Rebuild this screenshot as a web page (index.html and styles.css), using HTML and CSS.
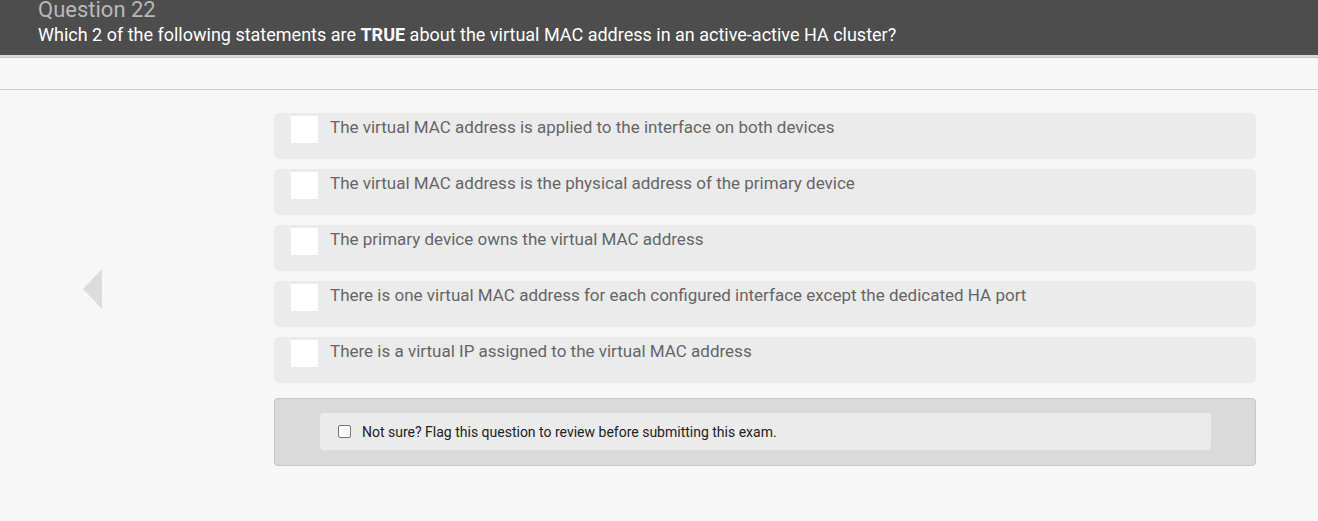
FILE: index.html
```html
<!DOCTYPE html>
<html>
<head>
<meta charset="utf-8">
<link rel="stylesheet" href="styles.css">
</head>
<body>
<header class="qhead">
  <div class="qnum">Question 22</div>
  <div class="qtext">Which 2 of the following statements are <b>TRUE</b> about the virtual MAC address in an active-active HA cluster?</div>
</header>
<div class="toolbar"></div>
<main class="stage">
  <div class="nav">
    <div class="arrow"></div>
  </div>
  <div class="content">
    <div class="options">
      <div class="opt"><span class="box"></span><span class="label">The virtual MAC address is applied to the interface on both devices</span></div>
      <div class="opt"><span class="box"></span><span class="label">The virtual MAC address is the physical address of the primary device</span></div>
      <div class="opt"><span class="box"></span><span class="label">The primary device owns the virtual MAC address</span></div>
      <div class="opt"><span class="box"></span><span class="label">There is one virtual MAC address for each configured interface except the dedicated HA port</span></div>
      <div class="opt"><span class="box"></span><span class="label">There is a virtual IP assigned to the virtual MAC address</span></div>
    </div>
    <div class="flagpanel">
      <label class="flag"><span class="cb"></span>Not sure? Flag this question to review before submitting this exam.</label>
    </div>
  </div>
</main>
</body>
</html>
```
FILE: styles.css
```css
* { box-sizing: border-box; }
html, body { margin: 0; padding: 0; }
body {
  background: #f7f7f7;
  font-family: Roboto, "Liberation Sans", sans-serif;
  width: 1318px;
  height: 521px;
  overflow: hidden;
}
.qhead {
  background: #4d4d4d;
  height: 58px;
  padding: 0 0 0 38px;
  border-bottom: 2px solid #d9d9d9;
  box-shadow: 0 1px 0 #c6c6c6;
}
.qnum {
  color: #b8b8b8;
  font-size: 22px;
  line-height: 22px;
  margin-top: -1px;
}
.qtext {
  color: #ffffff;
  font-size: 18px;
  line-height: 22px;
  margin-top: 3px;
}
.qtext b { font-weight: 700; }
.toolbar {
  height: 32px;
  border-bottom: 1px solid #cccccc;
  margin-top: 1px;
}
.stage {
  display: flex;
  padding-top: 23px;
}
.nav {
  width: 274px;
  position: relative;
}
.arrow {
  position: absolute;
  left: 83px;
  top: 156px;
  width: 0;
  height: 0;
  border-top: 20px solid transparent;
  border-bottom: 20px solid transparent;
  border-right: 19px solid #dcdcdc;
}
.content {
  width: 982px;
  display: flex;
  flex-direction: column;
}
.options {
  display: flex;
  flex-direction: column;
  gap: 10px;
}
.opt {
  background: #ebebeb;
  border-radius: 5px;
  height: 46px;
  display: flex;
  align-items: flex-start;
  padding: 3px 0 0 17px;
}
.box {
  width: 27px;
  height: 27px;
  background: #ffffff;
  flex: none;
}
.label {
  margin-left: 12px;
  color: #666666;
  font-size: 17px;
  line-height: 22px;
  padding-top: 0;
}
.flagpanel {
  margin-top: 15px;
  height: 68px;
  background: #dadada;
  border: 1px solid #c8c8c8;
  border-radius: 4px;
  padding: 14px 44px 0 45px;
}
.flag {
  display: flex;
  align-items: center;
  height: 37px;
  background: #ebebeb;
  border-radius: 4px;
  padding-left: 18px;
  font-size: 14px;
  color: #222222;
}
.cb {
  width: 13px;
  height: 13px;
  border: 1px solid #767676;
  border-radius: 2px;
  background: #ffffff;
  margin-right: 11px;
  flex: none;
}
```
